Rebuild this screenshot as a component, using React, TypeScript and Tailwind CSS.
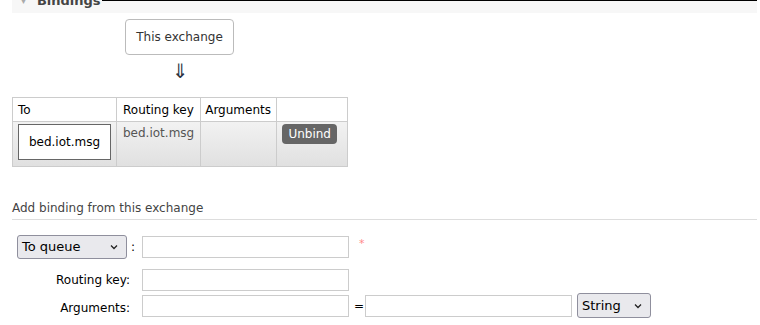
import React from "react";

const Chevron = () => (
  <svg width="10" height="10" viewBox="0 0 10 10" className="text-[#222]">
    <path d="M2 3.5 L5 6.5 L8 3.5" fill="none" stroke="currentColor" strokeWidth="1.3" />
  </svg>
);

const Input = ({ className = "" }: { className?: string }) => (
  <input
    className={`h-[22px] border border-[#ccc] bg-white outline-none ${className}`}
  />
);

export default function App() {
  return (
    <div className="w-[760px] h-[325px] overflow-hidden bg-white text-[12px] text-black font-['DejaVu_Sans','Verdana',sans-serif]">
      {/* collapsed section header, mostly scrolled away */}
      <div className="relative ml-[12px] w-[745px] h-[13px] bg-[#f7f7f7] overflow-hidden">
        <div className="absolute top-0 left-[90px] right-0 h-px bg-black" />
        <div className="flex items-center gap-[10px] pl-[8px] -mt-[9px] text-[#444]">
          <span className="text-[9px] text-[#aaa]">▼</span>
          <span className="text-[13px] font-bold">Bindings</span>
        </div>
      </div>

      <div className="ml-[125px] mt-[6px] w-[109px] h-[36px] border border-[#bbb] rounded-[4px] flex items-center justify-center text-[#333]">
        This exchange
      </div>
      <div className="ml-[172px] mt-[7px] h-[18px] text-[20px] leading-[18px] text-[#2b3340]">⇓</div>

      <table className="ml-[12px] mt-[17px] border-collapse border border-[#ccc]">
        <thead>
          <tr className="h-[24px] bg-white">
            <th className="w-[104px] border border-[#ccc] px-[5px] text-left font-normal">To</th>
            <th className="w-[82px] border border-[#ccc] px-[6px] text-left font-normal">Routing key</th>
            <th className="w-[76px] border border-[#ccc] px-[4px] text-left font-normal">Arguments</th>
            <th className="w-[71px] border border-[#ccc]"></th>
          </tr>
        </thead>
        <tbody>
          <tr className="h-[45px] bg-gradient-to-b from-[#f2f2f2] to-[#e0e0e0] align-top">
            <td className="border border-[#ccc] pl-[5px] pt-[2px]">
              <div className="w-[93px] h-[36px] border border-[#666] bg-white flex items-center justify-center">
                bed.iot.msg
              </div>
            </td>
            <td className="border border-[#ccc] px-[6px] pt-[2px] text-[#555]">bed.iot.msg</td>
            <td className="border border-[#ccc]"></td>
            <td className="border border-[#ccc] pl-[5px] pt-[2px]">
              <button className="w-[55px] h-[20px] rounded-[4px] bg-[#666] text-white flex items-center justify-center">
                Unbind
              </button>
            </td>
          </tr>
        </tbody>
      </table>

      <div className="ml-[12px] mt-[32px] w-[745px] border-b border-[#ddd] pb-[2px] text-[#444]">
        Add binding from this exchange
      </div>

      <div className="mt-[15px] flex flex-col gap-[10px]">
        <div className="flex items-center">
          <div className="ml-[17px] w-[110px] h-[24px] rounded-[3px] border border-[#8f8f9d] bg-[#e9e9ed] flex items-center justify-between pl-[4px] pr-[7px] text-[13px]">
            <span>To queue</span>
            <Chevron />
          </div>
          <span className="ml-[4px] w-[11px]">:</span>
          <Input className="w-[207px]" />
          <span className="ml-[10px] text-[#f88] text-[11px] -mt-[6px]">*</span>
        </div>

        <div className="flex items-center">
          <span className="w-[131px] text-right pr-[1px]">Routing key:</span>
          <Input className="ml-[11px] w-[207px]" />
        </div>

        <div className="flex items-center -mt-[8px]">
          <span className="w-[131px] text-right pt-[4px] pr-[1px]">Arguments:</span>
          <Input className="ml-[11px] w-[207px]" />
          <span className="ml-[5px] w-[11px]">=</span>
          <Input className="w-[207px]" />
          <div className="ml-[5px] w-[74px] h-[25px] rounded-[3px] border border-[#8f8f9d] bg-[#e9e9ed] flex items-center justify-between pl-[4px] pr-[7px] text-[13px]">
            <span>String</span>
            <Chevron />
          </div>
        </div>
      </div>
    </div>
  );
}
